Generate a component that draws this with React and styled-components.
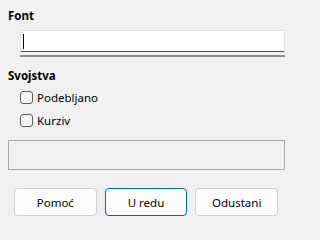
import React, { useState } from "react";
import styled, { createGlobalStyle } from "styled-components";

const GlobalStyle = createGlobalStyle`
  html, body {
    margin: 0;
    padding: 0;
    background: #f0f0f0;
  }
  body {
    font-family: "Noto Sans", "Open Sans", sans-serif;
    font-size: 11.5px;
    color: #000;
  }
`;

const Dialog = styled.div`
  width: 293px;
  height: 231px;
  box-sizing: border-box;
  padding: 8px 8px 0 8px;
  display: flex;
  flex-direction: column;
  background: #f0f0f0;
  overflow: hidden;
`;

const GroupTitle = styled.div`
  font-weight: 700;
  font-size: 11.5px;
  line-height: 16px;
  margin-top: ${(p) => p.$top || 0}px;
`;

const FieldWrap = styled.div`
  margin: 6px 0 0 12px;
  width: 265px;
  display: flex;
  flex-direction: column;
`;

const TextBox = styled.div`
  height: 20px;
  background: #fff;
  border: 1px solid #e3e3e3;
  border-bottom: 1px solid #0067c0;
  border-radius: 2px 2px 0 0;
  display: flex;
  align-items: center;
  padding-left: 2px;
`;

const Caret = styled.span`
  width: 1px;
  height: 15px;
  background: #000;
`;

const ListBar = styled.div`
  height: 2px;
  margin-top: 3px;
  background: #8b8b8f;
`;

const OptionList = styled.div`
  margin: 6px 0 0 12px;
  display: flex;
  flex-direction: column;
  gap: 8px;
`;

const Option = styled.label`
  display: flex;
  align-items: center;
  gap: 4px;
  height: 15px;
  line-height: 15px;
  cursor: default;
`;

const Box = styled.span`
  width: 11px;
  height: 11px;
  border: 1px solid #606060;
  border-radius: 3px;
  background: ${(p) => (p.$on ? "#0067c0" : "#f6f6f6")};
  display: flex;
  align-items: center;
  justify-content: center;
`;

const Preview = styled.div`
  margin-top: 12px;
  height: 28px;
  border: 1px solid #a9a9a9;
`;

const ButtonRow = styled.div`
  margin-top: 18px;
  padding: 0 7px 0 6px;
  display: flex;
  gap: 8px;
`;

const Button = styled.button`
  width: 83px;
  height: 28px;
  box-sizing: border-box;
  background: #fdfdfd;
  border: 1px solid ${(p) => (p.$primary ? "#0067c0" : "#d0d0d0")};
  border-radius: 4px;
  font-family: inherit;
  font-size: 11.5px;
  color: #000;
  padding: 0;
`;

const Check = ({ label }) => {
  const [on, setOn] = useState(false);
  return (
    <Option onClick={() => setOn(!on)}>
      <Box $on={on}>
        {on && (
          <svg width="9" height="9" viewBox="0 0 9 9">
            <path d="M1.5 4.5l2 2 4-4.5" stroke="#fff" strokeWidth="1.2" fill="none" />
          </svg>
        )}
      </Box>
      {label}
    </Option>
  );
};

export default function App() {
  return (
    <>
      <GlobalStyle />
      <Dialog>
        <GroupTitle>Font</GroupTitle>
        <FieldWrap>
          <TextBox>
            <Caret />
          </TextBox>
          <ListBar />
        </FieldWrap>

        <GroupTitle $top={11}>Svojstva</GroupTitle>
        <OptionList>
          <Check label="Podebljano" />
          <Check label="Kurziv" />
        </OptionList>

        <Preview />

        <ButtonRow>
          <Button>Pomoć</Button>
          <Button $primary>U redu</Button>
          <Button>Odustani</Button>
        </ButtonRow>
      </Dialog>
    </>
  );
}
